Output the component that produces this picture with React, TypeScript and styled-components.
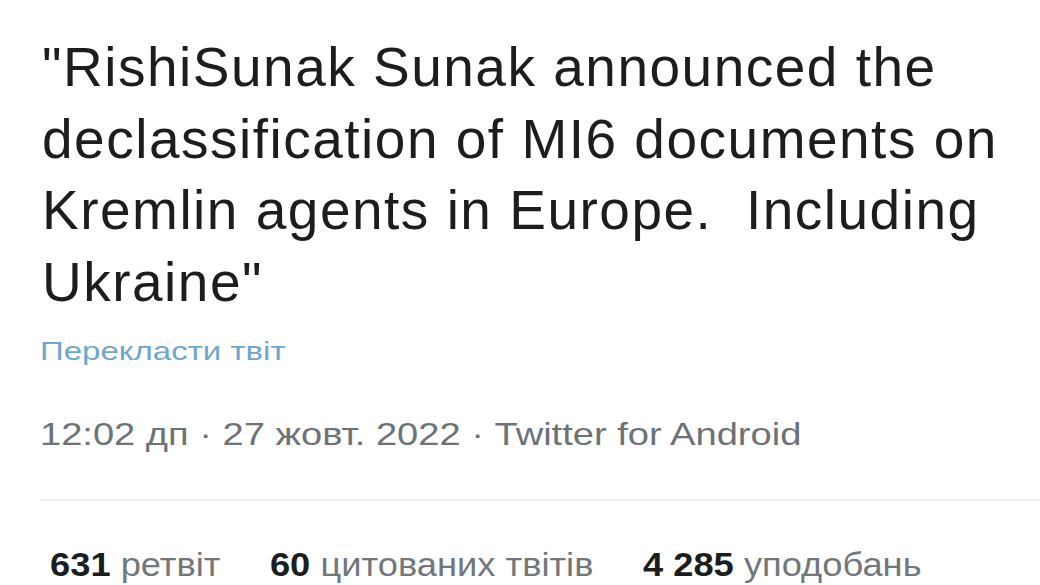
import React from 'react';
import styled, { createGlobalStyle } from 'styled-components';

const GlobalStyle = createGlobalStyle`
  html, body {
    margin: 0;
    padding: 0;
    background: #ffffff;
  }
  body {
    font-family: "Liberation Sans", Arial, sans-serif;
    -webkit-font-smoothing: antialiased;
  }
`;

const stats = [
  { value: '631', label: 'ретвіт' },
  { value: '60', label: 'цитованих твітів' },
  { value: '4 285', label: 'уподобань' },
];

const App: React.FC = () => {
  return (
    <>
      <GlobalStyle />
      <Tweet>
        <Body>
          "RishiSunak Sunak announced the declassification of MI6 documents on
          Kremlin agents in Europe.&nbsp; Including Ukraine"
        </Body>
        <Translate>Перекласти твіт</Translate>
        <Meta>12:02 дп · 27 жовт. 2022 · Twitter for Android</Meta>
        <Divider />
        <Stats>
          {stats.map((s) => (
            <Stat key={s.value}>
              <b>{s.value}</b> {s.label}
            </Stat>
          ))}
        </Stats>
      </Tweet>
    </>
  );
};

const Tweet = styled.div`
  width: 1040px;
  height: 585px;
  overflow: hidden;
  box-sizing: border-box;
  padding: 32px 0 0 40px;
  display: flex;
  flex-direction: column;
  align-items: stretch;
`;

const Body = styled.p`
  margin: 0 0 0 2px;
  width: 995px;
  font-size: 55px;
  line-height: 71.5px;
  letter-spacing: 1.5px;
  color: #1c1d1f;
`;

// the small text in the screenshot is drawn wide, so it is stretched sideways
const Translate = styled.a`
  align-self: flex-start;
  margin-top: 18px;
  font-size: 25px;
  line-height: 30px;
  color: #6fa7cc;
  transform: scaleX(1.32);
  transform-origin: left center;
`;

const Meta = styled.div`
  align-self: flex-start;
  margin-top: 48px;
  font-size: 32px;
  line-height: 40px;
  color: #6d7278;
  transform: scaleX(1.19);
  transform-origin: left center;
`;

const Divider = styled.hr`
  margin: 45px 0 0 0;
  border: none;
  border-top: 2px solid #efefef;
`;

const Stats = styled.div`
  align-self: flex-start;
  display: flex;
  gap: 45px;
  margin: 44px 0 0 10px;
  transform: scaleX(1.1);
  transform-origin: left center;
`;

const Stat = styled.span`
  font-size: 33px;
  line-height: 40px;
  color: #72777c;
  white-space: nowrap;

  b {
    color: #1c1d1f;
    font-weight: 700;
  }
`;

export default App;
